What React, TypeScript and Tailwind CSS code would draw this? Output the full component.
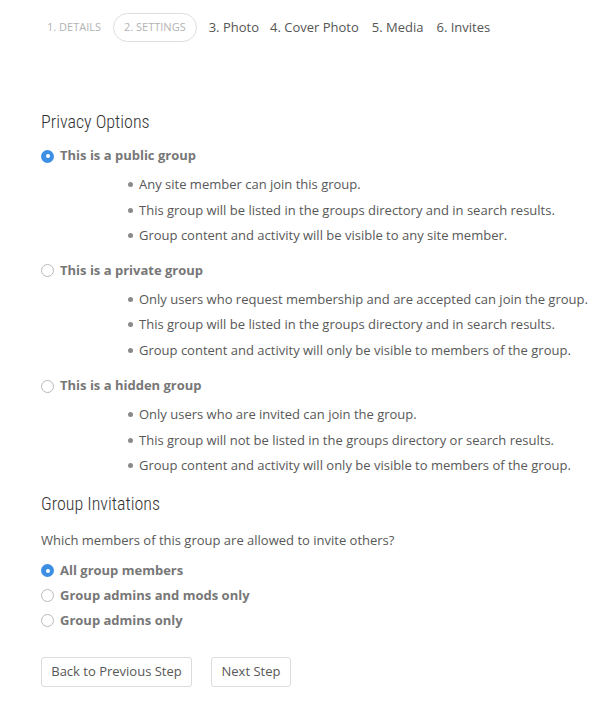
import React from "react";

const font = { fontFamily: '"Open Sans", "Liberation Sans", sans-serif' };

function Radio({ checked }: { checked?: boolean }) {
  return checked ? (
    <span className="inline-flex h-[13px] w-[13px] shrink-0 items-center justify-center rounded-full bg-[#3d8fe6]">
      <span className="h-[4px] w-[4px] rounded-full bg-white" />
    </span>
  ) : (
    <span className="inline-block h-[13px] w-[13px] shrink-0 rounded-full border border-[#b9b9b9] bg-white" />
  );
}

function RadioRow({ label, checked, h = "h-[20px]" }: { label: string; checked?: boolean; h?: string }) {
  return (
    <div className={`flex ${h} items-center gap-[6px]`}>
      <Radio checked={checked} />
      <span className="text-[13px] font-bold text-[#777]">{label}</span>
    </div>
  );
}

function Bullets({ items }: { items: string[] }) {
  return (
    <ul className="mt-[6px] pl-[87px]">
      {items.map((t) => (
        <li key={t} className="flex h-[25.5px] items-center text-[13px] text-[#585858]">
          <span className="mr-[6px] h-[5px] w-[5px] shrink-0 rounded-full bg-[#8a8a8a]" />
          {t}
        </li>
      ))}
    </ul>
  );
}

const headingFont = {
  fontFamily: '"Roboto Condensed", "Liberation Sans Narrow", "DejaVu Sans Condensed", Roboto, sans-serif',
};

export default function App() {
  return (
    <div className="min-h-[708px] w-[612px] bg-white" style={font}>
      <nav className="flex items-center pt-[13px]">
        <span className="ml-[47px] text-[11px] uppercase text-[#b3b3b3]">1. Details</span>
        <span className="ml-[12px] flex h-[29px] items-center rounded-full border border-[#dedede] px-[10px] text-[11px] uppercase text-[#b3b3b3]">
          2. Settings
        </span>
        <span className="ml-[12px] text-[13px] text-[#555]">3. Photo</span>
        <span className="ml-[11px] text-[13px] text-[#555]">4. Cover Photo</span>
        <span className="ml-[13px] text-[13px] text-[#555]">5. Media</span>
        <span className="ml-[13px] text-[13px] text-[#555]">6. Invites</span>
      </nav>

      <main className="pl-[41px]">
        <h2 className="mt-[68px] h-[24px] text-[18px] font-light leading-[24px] text-[#333]" style={headingFont}>
          Privacy Options
        </h2>

        <div className="mt-[12px]">
          <RadioRow label="This is a public group" checked />
        </div>
        <Bullets
          items={[
            "Any site member can join this group.",
            "This group will be listed in the groups directory and in search results.",
            "Group content and activity will be visible to any site member.",
          ]}
        />

        <div className="mt-[12px]">
          <RadioRow label="This is a private group" />
        </div>
        <Bullets
          items={[
            "Only users who request membership and are accepted can join the group.",
            "This group will be listed in the groups directory and in search results.",
            "Group content and activity will only be visible to members of the group.",
          ]}
        />

        <div className="mt-[13px]">
          <RadioRow label="This is a hidden group" />
        </div>
        <Bullets
          items={[
            "Only users who are invited can join the group.",
            "This group will not be listed in the groups directory or search results.",
            "Group content and activity will only be visible to members of the group.",
          ]}
        />

        <h2 className="mt-[13px] h-[24px] text-[18px] font-light leading-[24px] text-[#333]" style={headingFont}>
          Group Invitations
        </h2>

        <p className="mt-[14px] h-[20px] text-[13px] leading-[20px] text-[#585858]">
          Which members of this group are allowed to invite others?
        </p>

        <div className="mt-[8.5px]">
          <RadioRow label="All group members" checked h="h-[25px]" />
          <RadioRow label="Group admins and mods only" h="h-[25px]" />
          <RadioRow label="Group admins only" h="h-[25px]" />
        </div>

        <div className="mt-[23.5px] flex gap-[19px]">
          <button className="h-[30px] w-[151px] rounded-[3px] border border-[#dcdcdc] bg-white text-[13px] text-[#585858]">
            Back to Previous Step
          </button>
          <button className="h-[30px] w-[80px] rounded-[3px] border border-[#dcdcdc] bg-white text-[13px] text-[#585858]">
            Next Step
          </button>
        </div>
      </main>
    </div>
  );
}
